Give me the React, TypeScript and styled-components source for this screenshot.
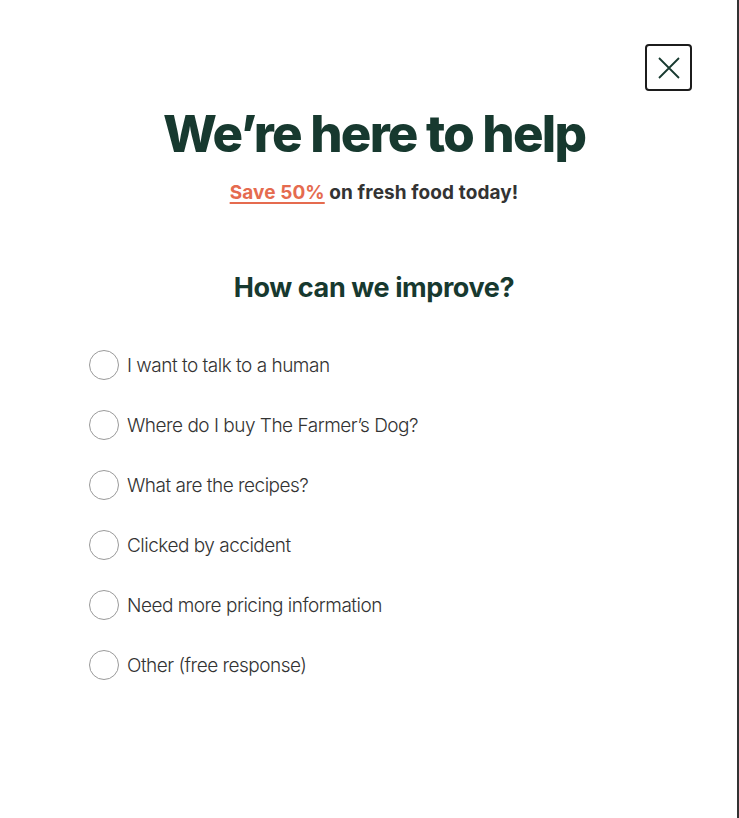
import React, { useState } from 'react';
import styled, { createGlobalStyle } from 'styled-components';

const GlobalStyle = createGlobalStyle`
  html, body {
    margin: 0;
    padding: 0;
    background: #ffffff;
  }
  body {
    font-family: Inter, "Noto Sans", sans-serif;
  }
`;

const OPTIONS = [
  'I want to talk to a human',
  'Where do I buy The Farmer’s Dog?',
  'What are the recipes?',
  'Clicked by accident',
  'Need more pricing information',
  'Other (free response)',
];

const App = () => {
  const [selected, setSelected] = useState<number | null>(null);

  return (
    <>
      <GlobalStyle />
      <Page>
        <Modal>
          <CloseRow>
            <CloseButton aria-label="Close">
              <svg width="24" height="24" viewBox="0 0 24 24" fill="none">
                <path d="M2 2L22 22M22 2L2 22" stroke="#17392f" strokeWidth="1.8" />
              </svg>
            </CloseButton>
          </CloseRow>
          <Header>
            <Heading>We’re here to help</Heading>
            <Promo>
              <PromoLink href="#">Save 50%</PromoLink> on fresh food today!
            </Promo>
            <Question>How can we improve?</Question>
          </Header>
          <OptionList>
            {OPTIONS.map((label, i) => (
              <Option key={label} onClick={() => setSelected(i)}>
                <Radio $checked={selected === i} />
                <OptionLabel>{label}</OptionLabel>
              </Option>
            ))}
          </OptionList>
        </Modal>
      </Page>
    </>
  );
};

const Page = styled.div`
  width: 737px;
  min-height: 818px;
  border-right: 2px solid #333333;
  background: #ffffff;
`;

const Modal = styled.div`
  display: flex;
  flex-direction: column;
  padding: 44px 45px 0 0;
`;

const CloseRow = styled.div`
  display: flex;
  justify-content: flex-end;
`;

const CloseButton = styled.button`
  width: 47px;
  height: 47px;
  display: flex;
  align-items: center;
  justify-content: center;
  border: 2px solid #1c1c1c;
  border-radius: 4px;
  background: #ffffff;
  padding: 0;
  cursor: pointer;
`;

const Header = styled.div`
  display: flex;
  flex-direction: column;
  align-items: center;
  margin-right: -56px;
  text-align: center;
`;

const Heading = styled.h1`
  margin: 14px 0 0;
  font-size: 51px;
  line-height: 58px;
  font-weight: 800;
  letter-spacing: -1.8px;
  color: #17392f;
`;

const Promo = styled.p`
  margin: 17px 0 0;
  font-size: 19px;
  line-height: 26px;
  font-weight: 700;
  letter-spacing: 0.1px;
  color: #333333;
`;

const PromoLink = styled.a`
  color: #e56b4f;
  text-decoration: underline;
  text-decoration-thickness: 2px;
  text-underline-offset: 3px;
`;

const Question = styled.h2`
  margin: 65px 0 0;
  font-size: 27px;
  line-height: 34px;
  font-weight: 700;
  letter-spacing: -0.4px;
  color: #17392f;
`;

const OptionList = styled.div`
  display: flex;
  flex-direction: column;
  gap: 28px;
  margin-top: 44px;
  padding-left: 89px;
`;

const Option = styled.label`
  display: flex;
  align-items: center;
  gap: 8px;
  height: 32px;
  cursor: pointer;
`;

const Radio = styled.span<{ $checked: boolean }>`
  width: 30px;
  height: 30px;
  box-sizing: border-box;
  border-radius: 50%;
  border: 1px solid #9a9a9a;
  background: ${({ $checked }) => ($checked ? 'radial-gradient(circle, #17392f 0 6px, #fff 7px)' : '#fff')};
  flex-shrink: 0;
`;

const OptionLabel = styled.span`
  font-size: 19px;
  font-weight: 300;
  letter-spacing: -0.5px;
  color: #333333;
`;

export default App;
